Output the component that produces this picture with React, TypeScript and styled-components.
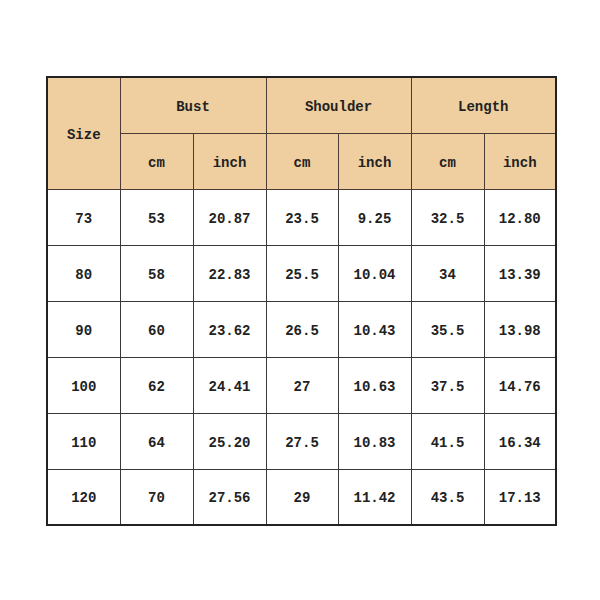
import styled, { createGlobalStyle } from 'styled-components';

const GlobalStyle = createGlobalStyle`
  html, body {
    margin: 0;
    background: #ffffff;
  }
`;

const rows: string[][] = [
  ['73', '53', '20.87', '23.5', '9.25', '32.5', '12.80'],
  ['80', '58', '22.83', '25.5', '10.04', '34', '13.39'],
  ['90', '60', '23.62', '26.5', '10.43', '35.5', '13.98'],
  ['100', '62', '24.41', '27', '10.63', '37.5', '14.76'],
  ['110', '64', '25.20', '27.5', '10.83', '41.5', '16.34'],
  ['120', '70', '27.56', '29', '11.42', '43.5', '17.13'],
];

const groups = ['Bust', 'Shoulder', 'Length'];

export default function App() {
  return (
    <Page>
      <GlobalStyle />
      <Table>
        <colgroup>
          {[73, 73, 73, 72, 73, 73, 72].map((w, i) => (
            <col key={i} style={{ width: w }} />
          ))}
        </colgroup>
        <thead>
          <tr>
            <HeadCell rowSpan={2}>Size</HeadCell>
            {groups.map((g) => (
              <HeadCell key={g} colSpan={2}>
                {g}
              </HeadCell>
            ))}
          </tr>
          <tr>
            {groups.map((g) => [
              <HeadCell key={g + 'cm'}>cm</HeadCell>,
              <HeadCell key={g + 'in'}>inch</HeadCell>,
            ])}
          </tr>
        </thead>
        <tbody>
          {rows.map((r) => (
            <tr key={r[0]}>
              {r.map((v, i) => (
                <Cell key={i}>{v}</Cell>
              ))}
            </tr>
          ))}
        </tbody>
      </Table>
    </Page>
  );
}

const Page = styled.div`
  width: 600px;
  height: 600px;
  padding: 76px 0 0 46px;
  box-sizing: border-box;
`;

const Table = styled.table`
  table-layout: fixed;
  border-collapse: collapse;
  width: 509px;
  border: 2px solid #222;
  font-family: 'Liberation Mono', 'DejaVu Sans Mono', monospace;
  font-size: 14px;
  color: #222;
`;

const HeadCell = styled.th`
  background: #efcfa0;
  border: 1px solid #4a3c34;
  height: 56px;
  padding: 3px 0 0;
  box-sizing: border-box;
  text-align: center;
  font-weight: bold;
  white-space: pre;
`;

const Cell = styled.td`
  border: 1px solid #3a3a3a;
  height: 56px;
  padding: 3px 0 0;
  box-sizing: border-box;
  text-align: center;
  font-weight: bold;
  white-space: pre;
`;
